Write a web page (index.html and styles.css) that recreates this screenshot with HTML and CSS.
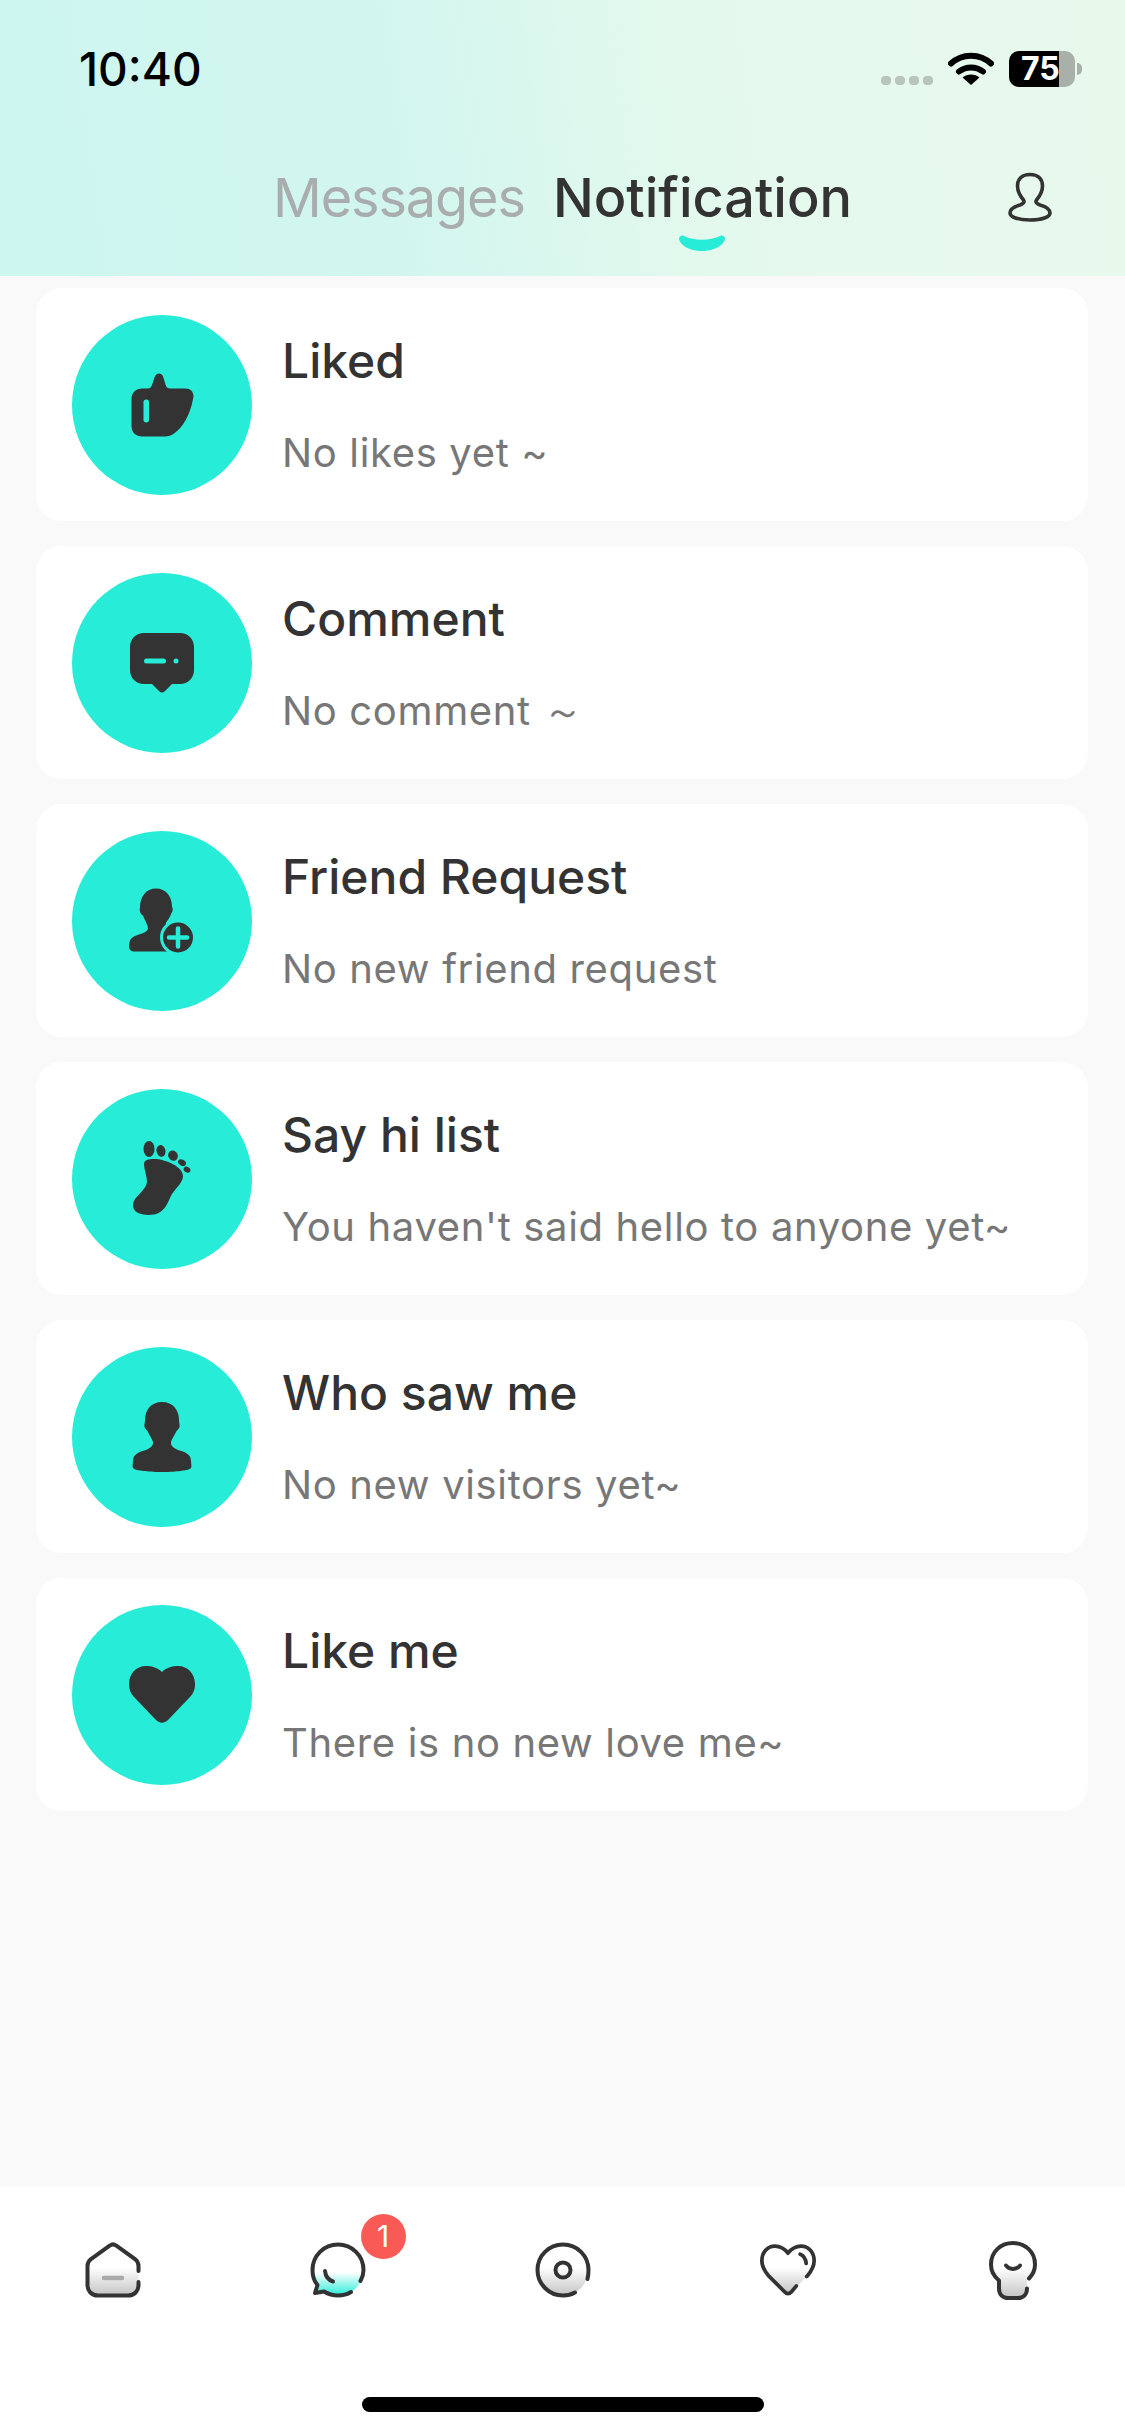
FILE: index.html
```html
<!DOCTYPE html>
<html>
  <head>
    <title>Notification</title>
    <link rel="stylesheet" href="styles.css">
  </head>
  <body>
    <div class="header">
      <div class="status-bar">
        <span class="time">10:40</span>
        <div class="status-icons">
          <div class="signal"><i></i><i></i><i></i><i></i></div>
          <svg class="wifi" viewBox="0 0 46 33">
            <path d="M3 11.500C14 1 32 1 43 11.500" fill="none" stroke="#000" stroke-width="6" stroke-linecap="round"/>
            <path d="M11 19.500C18 14 28 14 35 19.500" fill="none" stroke="#000" stroke-width="6" stroke-linecap="round"/>
            <path d="M23 33L14.500 25.500C19 21.500 27 21.500 31.500 25.500Z"/>
          </svg>
          <div class="battery">
            <div class="battery-body">
              <div class="battery-level"></div>
              <span class="battery-text">75</span>
            </div>
            <div class="battery-tip"></div>
          </div>
        </div>
      </div>
      <div class="tabs">
        <span class="tab tab-muted">Messages</span>
        <span class="tab tab-active">Notification
          <svg class="smile" viewBox="0 0 46 16">
            <path d="M0 3C1 1 3 0 5 1C15 6 31 6 41 1C43 0 45 1 46 3C46 10 35 16 23 16C11 16 0 10 0 3Z" fill="#27ecd8"/>
          </svg>
        </span>
        <svg class="user-icon" viewBox="0 0 44 50" fill="none" stroke="#333" stroke-width="3.600" stroke-linejoin="round">
          <path d="M22 2.500C14 2.500 9.500 7 9.500 14C9.500 21 13 25 15.500 28C17 30 15 32 12 33C5 35 2 38 2 41C2 45 10 48 22 48C34 48 42 45 42 41C42 38 39 35 32 33C29 32 27 30 28.500 28C31 25 34.500 21 34.500 14C34.500 7 30 2.500 22 2.500Z"/>
        </svg>
      </div>
    </div>

    <div class="list">
      <div class="card">
        <div class="circle">
          <svg viewBox="-6.500 -6.500 76 76">
            <path d="M12 15H17C20 15 21 13 22 10L24 4C25.500 -1 31 -1 32.500 3L35 11C36 14 37 15 40 15H55C60 15 63 18 63 23C61 35 56 50 46 58C42 62 38 63 33 63H12C5 63 1 59 1 52V26C1 19 5 15 12 15Z" fill="#333"/>
            <rect x="13" y="26" width="5.500" height="23" rx="2.700" fill="#27ecd8"/>
          </svg>
        </div>
        <div class="info">
          <div class="title">Liked</div>
          <div class="sub">No likes yet ~</div>
        </div>
      </div>
      <div class="card">
        <div class="circle">
          <svg viewBox="-6 -6 76 76">
            <path d="M14 2H50C58 2 64 8 64 16V39C64 47 58 53 50 53H42L35 60C33 62 31 62 29 60L22 53H14C6 53 0 47 0 39V16C0 8 6 2 14 2Z" fill="#333"/>
            <rect x="14" y="27.500" width="22" height="5" rx="2.500" fill="#27ecd8"/>
            <circle cx="46" cy="30" r="2.500" fill="#27ecd8"/>
          </svg>
        </div>
        <div class="info">
          <div class="title">Comment</div>
          <div class="sub">No comment ～</div>
        </div>
      </div>
      <div class="card">
        <div class="circle">
          <svg viewBox="-5 -5.500 76 76">
            <path d="M27 0C37 0 43 8 43 18C44 20 44 23 42.500 24.500C41 29 38.500 32 37 34C36.500 37 39 39 36 46C33 53 34 56 38 63H6C2 63 0 61 0 58C0 52 2 49 6 47.500C13 45 18 44 19 40C19 37 16.500 33 14 27C12 26 10 23 11 19C11 8 17 0 27 0Z" fill="#333"/>
            <circle cx="49" cy="49" r="16.500" fill="#333" stroke="#27ecd8" stroke-width="3"/>
            <path d="M49 40V58M40 49H58" stroke="#27ecd8" stroke-width="4.500" stroke-linecap="round"/>
          </svg>
        </div>
        <div class="info">
          <div class="title">Friend Request</div>
          <div class="sub">No new friend request</div>
        </div>
      </div>
      <div class="card">
        <div class="circle">
          <svg viewBox="0 0 76 76" fill="#333">
            <ellipse cx="25" cy="8" rx="5.500" ry="8"/>
            <ellipse cx="37" cy="10" rx="4.500" ry="6" transform="rotate(-12 37 10)"/>
            <ellipse cx="49" cy="14.700" rx="4.700" ry="5.300" transform="rotate(-30 49 14.700)"/>
            <ellipse cx="58" cy="21.700" rx="4.200" ry="3" transform="rotate(30 58 21.700)"/>
            <ellipse cx="63" cy="28.700" rx="3.500" ry="2.800" transform="rotate(30 63 28.700)"/>
            <path d="M20 23C20 19 24 18 30 18C42 18 59 26 59 35C59 41 53 46 48 53C44 60 42 71 30 73.500C20 75 8 73 9 63C10 55 22 50 23 41C23 35 20 29 20 23Z"/>
          </svg>
        </div>
        <div class="info">
          <div class="title">Say hi list</div>
          <div class="sub">You haven't said hello to anyone yet~</div>
        </div>
      </div>
      <div class="card">
        <div class="circle">
          <svg viewBox="-8 -3 76 76" fill="#333">
            <path d="M30 0C41 0 47 8 47 18C47 21 48 23 47.500 25C47 27 45 28 44.500 29C43 33 40 36 39 40C38.500 44 42 46 46 48C53 50 59 52 59 59C59 62 60 64 59 66C57 69 40 70 30 70C20 70 3 69 1 66C0 64 1 62 1 59C1 52 7 50 14 48C18 46 21.500 44 21 40C20 36 17 33 15.500 29C15 28 13 27 12.500 25C12 23 13 21 13 18C13 8 19 0 30 0Z"/>
          </svg>
        </div>
        <div class="info">
          <div class="title">Who saw me</div>
          <div class="sub">No new visitors yet~</div>
        </div>
      </div>
      <div class="card">
        <div class="circle">
          <svg viewBox="-5 -9 76 76">
            <path d="M33 6C38 1 44 0 49 0C59 0 66 8 66 18C66 24 64 28 60 32L40 53C35 58 31 58 26 53L6 32C2 28 0 24 0 18C0 8 7 0 17 0C22 0 28 1 33 6Z" fill="#333"/>
          </svg>
        </div>
        <div class="info">
          <div class="title">Like me</div>
          <div class="sub">There is no new love me~</div>
        </div>
      </div>
    </div>

    <div class="nav">
      <div class="nav-row">
        <div class="nav-item">
          <svg class="nav-icon" viewBox="0 0 56 56">
            <defs>
              <linearGradient id="grey" x1="0" y1="0" x2="0" y2="1">
                <stop offset="0.45" stop-color="#fff"/>
                <stop offset="1" stop-color="#c4c4c4"/>
              </linearGradient>
              <linearGradient id="teal" x1="0" y1="0" x2="0" y2="1">
                <stop offset="0.55" stop-color="#fff"/>
                <stop offset="1" stop-color="#27ecd8"/>
              </linearGradient>
            </defs>
            <path d="M25 3.500C27 2 29 2 31 3.500L50 17C52.500 19 53.500 21 53.500 24V43C53.500 49 49.500 53.500 43 53.500H13C6.500 53.500 2.500 49 2.500 43V24C2.500 21 3.500 19 6 17Z" fill="url(#grey)"/>
            <path d="M53.500 29V24C53.500 21 52.500 19 50 17L31 3.500C29 2 27 2 25 3.500L6 17C3.500 19 2.500 21 2.500 24V43C2.500 49 6.500 53.500 13 53.500H43C49.500 53.500 53.500 49 53.500 43V40" fill="none" stroke="#333" stroke-width="4" stroke-linecap="round"/>
            <path d="M19 36H37" stroke="#aaa" stroke-width="4.500" stroke-linecap="round"/>
          </svg>
        </div>
        <div class="nav-item">
          <div class="badge-wrap">
            <svg class="nav-icon" viewBox="0 0 56 56">
              <path d="M28 2.500C42 2.500 53.500 13.500 53.500 28C53.500 42 42 53.500 28 53.500C23 53.500 18 52 14 49.500L5 51L7.500 43C4 39 2.500 33.500 2.500 28C2.500 13.500 14 2.500 28 2.500Z" fill="url(#teal)"/>
              <path d="M50.500 39C52.500 35.500 53.500 32 53.500 28C53.500 13.500 42 2.500 28 2.500C14 2.500 2.500 13.500 2.500 28C2.500 33.500 4 39 7.500 43L5 51L14 49.500C18 52 23 53.500 28 53.500C33 53.500 37 52.500 41 50" fill="none" stroke="#333" stroke-width="4" stroke-linecap="round" stroke-linejoin="round"/>
              <path d="M15 29C15.500 34 18.500 38 23 39.500" fill="none" stroke="#333" stroke-width="4" stroke-linecap="round"/>
            </svg>
            <span class="badge">1</span>
          </div>
        </div>
        <div class="nav-item">
          <svg class="nav-icon" viewBox="0 0 56 56">
            <circle cx="28" cy="28" r="25.500" fill="url(#grey)"/>
            <path d="M52.500 37C53.200 34 53.500 31 53.500 28C53.500 13.500 42 2.500 28 2.500C14 2.500 2.500 13.500 2.500 28C2.500 42 14 53.500 28 53.500C32.500 53.500 36.500 52.500 40 50.500" fill="none" stroke="#333" stroke-width="4" stroke-linecap="round"/>
            <circle cx="28" cy="28" r="7.500" fill="none" stroke="#333" stroke-width="4"/>
          </svg>
        </div>
        <div class="nav-item">
          <svg class="nav-icon" viewBox="0 0 60 56">
            <path d="M30 10C34 5 39 2.500 44 2.500C52 2.500 58 9 58 18C58 24 55 29 51 34L34 51C31.500 54 28.500 54 26 51L9 34C5 29 2 24 2 18C2 9 8 2.500 16 2.500C21 2.500 26 5 30 10Z" fill="url(#grey)"/>
            <path d="M50 35L51 34C55 29 58 24 58 18C58 9 52 2.500 44 2.500C39 2.500 34 5 30 10C26 5 21 2.500 16 2.500C8 2.500 2 9 2 18C2 24 5 29 9 34L26 51C28.500 54 31.500 54 34 51L39 45" fill="none" stroke="#333" stroke-width="4" stroke-linecap="round" stroke-linejoin="round"/>
            <path d="M43 11C47 12.500 49 16 49.500 21" fill="none" stroke="#333" stroke-width="4" stroke-linecap="round"/>
          </svg>
        </div>
        <div class="nav-item">
          <svg class="nav-icon" viewBox="-3 1.500 56 56">
            <path d="M25 2.500C37 2.500 47 11 47 24C47 31 44 36 39 40V48C39 54 35 57.500 30 57.500H20C15 57.500 11 54 11 48V40C6 36 3 31 3 24C3 11 13 2.500 25 2.500Z" fill="url(#grey)"/>
            <path d="M41 38C45 34 47 30 47 24C47 11 37 2.500 25 2.500C13 2.500 3 11 3 24C3 31 6 36 11 40V48C11 54 15 57.500 20 57.500H30C35 57.500 39 54 39 48" fill="none" stroke="#333" stroke-width="4" stroke-linecap="round" stroke-linejoin="round"/>
            <path d="M18 25C21 29.500 29 29.500 32 25" fill="none" stroke="#333" stroke-width="4" stroke-linecap="round"/>
          </svg>
        </div>
      </div>
      <div class="home-bar"></div>
    </div>
  </body>
</html>
```

FILE: styles.css
```css
body {
  font-family: "Inter", "Liberation Sans", sans-serif;
  margin: 0;
  padding: 0;
  width: 1125px;
  height: 2436px;
  background-color: #f9f9f9;
  color: #333;
  display: flex;
  flex-direction: column;
  overflow: hidden;
}

.header {
  height: 276px;
  background: linear-gradient(82deg, #cdf6f0 0%, #d2f6ef 35%, #e4f9ed 62%, #e8f9ec 100%);
}

.status-bar {
  display: flex;
  justify-content: space-between;
  padding: 42px 43px 0 79px;
  height: 54px;
}

.time {
  font-size: 46px;
  font-weight: 500;
  color: #000;
  line-height: 54px;
}

.status-icons {
  display: flex;
  align-items: flex-end;
  height: 46px;
}

.signal {
  display: flex;
  gap: 4px;
  margin-right: 15px;
  margin-bottom: 3px;
}

.signal i {
  width: 10px;
  height: 9px;
  border-radius: 4px;
  background-color: #b9c4bd;
}

.wifi {
  width: 46px;
  height: 33px;
  margin-right: 15px;
  margin-bottom: 3px;
}

.battery {
  display: flex;
  align-items: center;
  margin-bottom: 1px;
}

.battery-body {
  position: relative;
  width: 66px;
  height: 36px;
  border-radius: 10px;
  background-color: #a9b0aa;
}

.battery-level {
  width: 50px;
  height: 36px;
  border-radius: 10px 0 0 10px;
  background-color: #000;
}

.battery-text {
  position: absolute;
  left: 12px;
  top: 0;
  font-size: 32px;
  line-height: 36px;
  font-weight: 700;
  color: #fff;
}

.battery-tip {
  width: 5px;
  height: 12px;
  margin-left: 2px;
  border-radius: 0 6px 6px 0;
  background-color: #a9b0aa;
}

.tabs {
  position: relative;
  display: flex;
  justify-content: center;
  gap: 28px;
  padding-top: 71px;
}

.tab {
  font-size: 54px;
  line-height: 62px;
  color: #a9adad;
}

.tab-muted {
  letter-spacing: -1.1px;
}

.tab-active {
  position: relative;
  color: #333;
  font-weight: 500;
}

.smile {
  position: absolute;
  left: 50%;
  bottom: -22px;
  width: 46px;
  height: 16px;
  margin-left: -23px;
}

.user-icon {
  position: absolute;
  left: 1008px;
  top: 76px;
  width: 44px;
  height: 50px;
}

.list {
  display: flex;
  flex-direction: column;
  gap: 25px;
  padding: 12px 37px 0 36px;
  flex: 1;
}

.card {
  display: flex;
  align-items: center;
  height: 233px;
  padding-left: 36px;
  border-radius: 26px;
  background-color: #fff;
}

.circle {
  display: flex;
  align-items: center;
  justify-content: center;
  width: 180px;
  height: 180px;
  border-radius: 50%;
  background-color: #27ecd8;
  flex-shrink: 0;
}

.circle svg {
  width: 76px;
  height: 76px;
}

.info {
  margin-left: 30px;
}

.title {
  font-size: 48px;
  font-weight: 500;
  line-height: 58px;
  color: #333;
}

.sub {
  margin-top: 39px;
  font-size: 40px;
  line-height: 48px;
  letter-spacing: 0.65px;
  color: #777;
}

.nav {
  height: 250px;
  background-color: #fff;
}

.nav-row {
  display: grid;
  grid-template-columns: repeat(5, 225px);
  padding-top: 56px;
}

.nav-item {
  display: flex;
  justify-content: center;
}

.nav-icon {
  display: block;
  width: 56px;
  height: 56px;
  overflow: visible;
}

.badge-wrap {
  position: relative;
}

.badge {
  position: absolute;
  left: 51px;
  top: -28px;
  width: 45px;
  height: 45px;
  border-radius: 50%;
  background-color: #fa5a55;
  color: #fff;
  font-size: 30px;
  line-height: 45px;
  text-align: center;
}

.home-bar {
  width: 402px;
  height: 15px;
  margin: 99px auto 0;
  border-radius: 8px;
  background-color: #000;
}
```
